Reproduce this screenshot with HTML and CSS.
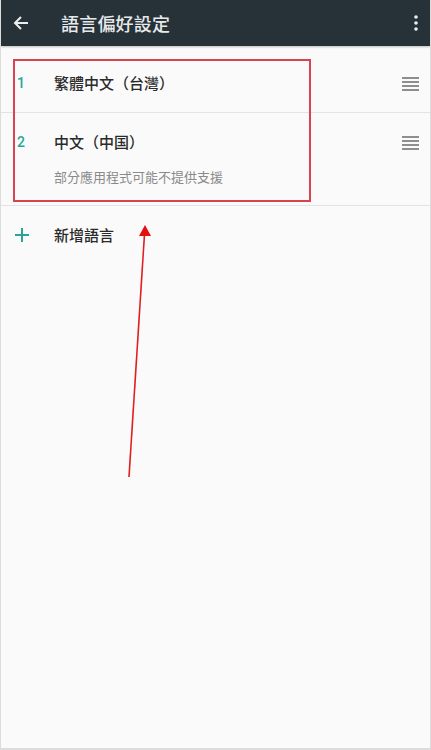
FILE: index.html
```html
<!DOCTYPE html>
<html lang="zh-Hant">
<head>
<meta charset="utf-8">
<link rel="stylesheet" href="styles.css">
</head>
<body>
<div class="screen">
  <header class="appbar">
    <svg class="back" width="18" height="18" viewBox="0 0 18 18"><path d="M16 9H3M9 3L3 9l6 6" fill="none" stroke="#eceff1" stroke-width="2"/></svg>
    <h1 class="title">語言偏好設定</h1>
    <svg class="more" width="4" height="16" viewBox="0 0 4 16"><circle cx="2" cy="2" r="1.8" fill="#eceff1"/><circle cx="2" cy="8" r="1.8" fill="#eceff1"/><circle cx="2" cy="14" r="1.8" fill="#eceff1"/></svg>
  </header>
  <main class="list">
    <div class="row row-one">
      <span class="num">1</span>
      <div class="texts"><div class="name">繁體中文（台灣）</div></div>
      <span class="handle"><i></i><i></i><i></i><i></i></span>
    </div>
    <div class="row row-two">
      <span class="num">2</span>
      <div class="texts">
        <div class="name">中文（中国）</div>
        <div class="sub">部分應用程式可能不提供支援</div>
      </div>
      <span class="handle"><i></i><i></i><i></i><i></i></span>
    </div>
    <div class="row row-add">
      <span class="plus"><svg width="14" height="14" viewBox="0 0 14 14"><path d="M7 0v14M0 7h14" stroke="#26a69a" stroke-width="2"/></svg></span>
      <div class="texts"><div class="name">新增語言</div></div>
    </div>
    <div class="highlight"></div>
    <svg class="arrow" width="431" height="750" viewBox="0 0 431 750"><line x1="129" y1="477" x2="144.5" y2="234" stroke="#e02020" stroke-width="1.6"/><polygon points="145,225 139,236 151,236" fill="#e41010"/></svg>
  </main>
</div>
</body>
</html>
```
FILE: styles.css
```css
* { box-sizing: border-box; }
html, body { margin: 0; padding: 0; }
body { font-family: "Noto Sans CJK TC", "Noto Sans", sans-serif; background: #fafafa; }
.screen {
  width: 431px; height: 750px; position: relative;
  background: #fafafa;
  border-left: 1px solid #dcdcdc; border-right: 1px solid #dcdcdc; border-bottom: 2px solid #dcdcdc;
  overflow: hidden;
}
.appbar {
  height: 46px; background: #263238;
  display: flex; align-items: center;
  padding: 0 12px 0 11px;
  box-shadow: 0 1px 2px rgba(0,0,0,0.25);
  position: relative; z-index: 1;
}
.back { flex: none; }
.title {
  margin: 0 0 0 31px; flex: 1;
  font-size: 18px; font-weight: 500; color: #e6e9eb; letter-spacing: 0.2px;
  line-height: 22px;
}
.more { flex: none; }
.list { position: relative; }
.row {
  display: flex; align-items: flex-start;
  border-bottom: 1px solid #e3e3e3;
  padding-left: 16px; padding-right: 11px;
}
.row-one { height: 67px; padding-top: 26px; }
.row-two { height: 93px; padding-top: 18px; }
.row-add { height: 62px; padding-top: 18px; border-bottom: none; }
.num {
  width: 37px; flex: none;
  font-family: Roboto, "Noto Sans", sans-serif;
  font-size: 14px; font-weight: 500; color: #26a69a; line-height: 22px;
}
.texts { flex: 1; }
.name { font-size: 15px; font-weight: 500; color: #2a2a2a; line-height: 22px; }
.sub { font-size: 13px; color: #8a8a8a; line-height: 18px; margin-top: 15px; }
.handle {
  flex: none; width: 17px; display: flex; flex-direction: column; gap: 2px;
  margin-top: 5px;
}
.handle i { display: block; height: 2px; background: #8e8e8e; }
.plus {
  width: 37px; flex: none; height: 22px;
  display: flex; align-items: center;
  margin-left: -2px; margin-right: 2px;
}
.highlight {
  position: absolute; left: 12px; top: 13px; width: 298px; height: 143px;
  border: 2px solid #d8434f;
}
.arrow { position: absolute; left: -1px; top: -46px; pointer-events: none; }
```
